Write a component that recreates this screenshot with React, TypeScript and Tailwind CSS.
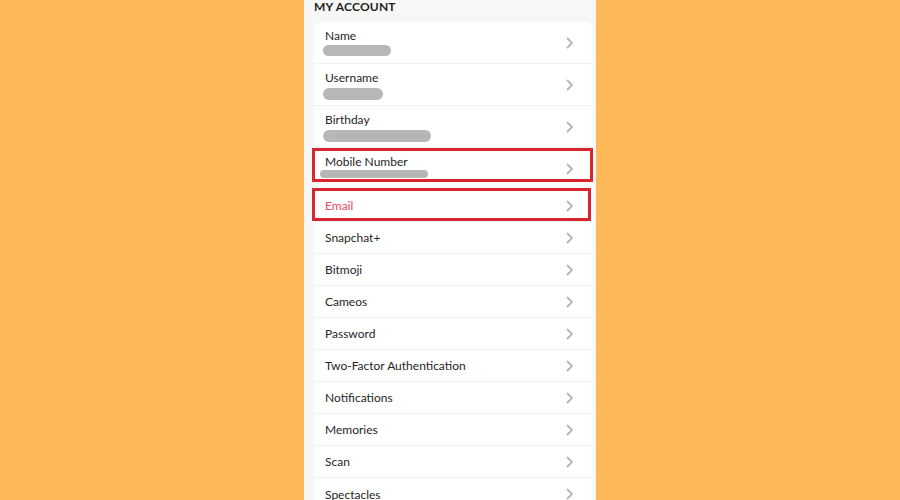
import React from 'react'

type Row = {
  label: string
  bar?: { w: number; h: number; x: number; mt: number }
  danger?: boolean
}

const ROWS: Row[] = [
  { label: 'Name', bar: { w: 68, h: 11, x: 9, mt: 1 } },
  { label: 'Username', bar: { w: 60, h: 12, x: 9, mt: 2 } },
  { label: 'Birthday', bar: { w: 108, h: 12, x: 9, mt: 2 } },
  { label: 'Mobile Number', bar: { w: 108, h: 8, x: 6, mt: 0 } },
  { label: 'Email', danger: true },
  { label: 'Snapchat+' },
  { label: 'Bitmoji' },
  { label: 'Cameos' },
  { label: 'Password' },
  { label: 'Two-Factor Authentication' },
  { label: 'Notifications' },
  { label: 'Memories' },
  { label: 'Scan' },
  { label: 'Spectacles' },
]

function Chevron() {
  return (
    <svg width="8" height="12" viewBox="0 0 8 12" className="shrink-0">
      <polyline
        points="1.5,1.5 6,6 1.5,10.5"
        fill="none"
        stroke="#b5b5b5"
        strokeWidth="1.8"
        strokeLinecap="round"
        strokeLinejoin="round"
      />
    </svg>
  )
}

function SettingsRow({ row, last }: { row: Row; last: boolean }) {
  const tall = !!row.bar
  return (
    <div
      className={`relative flex items-center shrink-0 pl-[11px] pr-[19px] ${tall ? 'h-[42px]' : 'h-[32px]'} ${
        last ? '' : 'border-b border-[#f0f0f0]'
      }`}
    >
      <div className={`flex-1 flex flex-col ${tall ? 'self-start pt-[6px]' : 'pt-[1px]'}`}>
        <span className={`text-[12px] leading-[16px] ${row.danger ? 'text-[#e8485f]' : 'text-[#262626]'}`}>
          {row.label}
        </span>
        {row.bar && (
          <div
            className="rounded-full bg-[#b7b7b7]"
            style={{ width: row.bar.w, height: row.bar.h, marginLeft: row.bar.x - 11, marginTop: row.bar.mt }}
          />
        )}
      </div>
      <Chevron />
      {row.label === 'Mobile Number' && (
        <div className="absolute left-[-2px] right-0 top-0 h-[34px] border-[3px] border-[#d7262e]" />
      )}
      {row.label === 'Email' && (
        <div className="absolute left-[-2px] right-[2px] top-[-2px] h-[33px] border-[3px] border-[#d7262e]" />
      )}
    </div>
  )
}

export default function App() {
  return (
    <div
      className="w-[900px] h-[500px] bg-[#fdb958] flex justify-center overflow-hidden"
      style={{ fontFamily: 'Lato, "Open Sans", sans-serif' }}
    >
      <div className="w-[292px] h-full bg-[#f7f7f7] flex flex-col overflow-hidden">
        <div className="shrink-0 pl-[10px] h-[22px] text-[12px] leading-[14px] font-bold text-[#1f1f1f] tracking-[0.2px]">
          MY ACCOUNT
        </div>
        <div className="shrink-0 ml-[10px] mr-[3px] bg-white rounded-t-[8px]">
          {ROWS.map((row, i) => (
            <SettingsRow key={row.label} row={row} last={i === ROWS.length - 1} />
          ))}
        </div>
      </div>
    </div>
  )
}
